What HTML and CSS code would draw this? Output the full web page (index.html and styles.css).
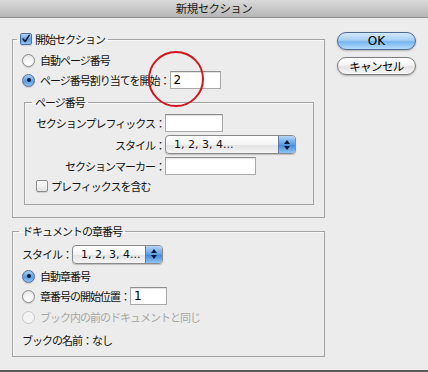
FILE: index.html
```html
<!DOCTYPE html>
<html lang="ja">
<head>
<meta charset="utf-8">
<title>新規セクション</title>
<link rel="stylesheet" href="styles.css">
</head>
<body>
<div class="window">
  <div class="titlebar">新規セクション</div>
  <div class="content">
    <div class="main">
      <fieldset class="group g1">
        <legend class="legend-check"><span class="checkbox checked"><svg viewBox="0 0 12 12" width="12" height="12"><path d="M2.6 6.2 L5 9 L9.8 1.6" fill="none" stroke="#0c1a3a" stroke-width="1.8" stroke-linecap="round" stroke-linejoin="round"/></svg></span>開始セクション</legend>
        <div class="row r-auto"><span class="radio"></span>自動ページ番号</div>
        <div class="row r-start"><span class="radio on"></span>ページ番号割り当てを開始：<span class="field f-start">2</span></div>
        <fieldset class="group inner">
          <legend>ページ番号</legend>
          <div class="form-grid">
            <span class="lbl">セクションプレフィックス：</span><span class="field f-prefix"></span>
            <span class="lbl">スタイル：</span><span class="select s-wide"><span class="sel-text">1, 2, 3, 4...</span><span class="sel-arrows"><i class="up"></i><i class="down"></i></span></span>
            <span class="lbl">セクションマーカー：</span><span class="field f-marker"></span>
          </div>
          <div class="row r-check"><span class="checkbox"></span>プレフィックスを含む</div>
        </fieldset>
      </fieldset>
      <fieldset class="group g2">
        <legend>ドキュメントの章番号</legend>
        <div class="row r-style">スタイル：<span class="select s-narrow"><span class="sel-text">1, 2, 3, 4...</span><span class="sel-arrows"><i class="up"></i><i class="down"></i></span></span></div>
        <div class="row r-auto2"><span class="radio on"></span>自動章番号</div>
        <div class="row r-start2"><span class="radio"></span>章番号の開始位置：<span class="field f-chap">1</span></div>
        <div class="row r-same disabled"><span class="radio"></span>ブック内の前のドキュメントと同じ</div>
        <div class="row r-book">ブックの名前：なし</div>
      </fieldset>
    </div>
    <div class="buttons">
      <div class="btn btn-ok">OK</div>
      <div class="btn btn-cancel">キャンセル</div>
    </div>
  </div>
  <div class="bottom-edge"></div>
  <div class="circle-mark"></div>
</div>
</body>
</html>
```
FILE: styles.css
```css
* { box-sizing: border-box; }
html, body { margin: 0; padding: 0; }
body {
  font-family: "DejaVu Sans", "Noto Sans CJK JP", sans-serif;
  font-size: 11px;
  color: #111;
  background: #ececec;
}
.window {
  position: relative;
  width: 428px;
  height: 372px;
  background: #ececec;
  overflow: hidden;
  display: flex;
  flex-direction: column;
}
.row, .group legend, .form-grid .lbl, .btn-cancel, .titlebar {
  letter-spacing: -1px;
}
.titlebar {
  height: 18px;
  flex: none;
  background: linear-gradient(#dadada, #b6b6b6);
  border-bottom: 1px solid #8d8d8d;
  text-align: center;
  font-family: "Noto Sans CJK JP", sans-serif;
  font-size: 11.5px;
  line-height: 17px;
  color: #1a1a1a;
  letter-spacing: -0.6px;
}
.content {
  flex: 1;
  display: flex;
  gap: 12px;
  padding: 0 0 0 12px;
}
.main { width: 313px; display: flex; flex-direction: column; }
.group {
  margin: 0;
  border: 1px solid #a3a3a3;
  box-shadow: inset 1px 1px 0 #f8f8f8;
  min-width: 0;
}
.group legend {
  height: 14px;
  line-height: 14px;
  padding: 0 3px;
  font-family: "Noto Sans CJK JP", sans-serif;
  display: flex;
  align-items: center;
}
.g1 { margin-top: 14px; padding: 6px 10px 12px 9px; }
.g1 > legend { margin-left: -5px; }
.g2 { margin-top: 6px; padding: 6px 10px 8px 9px; }
.g2 > legend { margin-left: -3px; }
.inner { margin: 5px 0 0 2px; padding: 5px 10px 11px 11px; }
.inner > legend { margin-left: -4px; }

.row {
  display: flex;
  align-items: center;
  height: 16px;
  font-family: "Noto Sans CJK JP", sans-serif;
  white-space: nowrap;
}
.r-start { height: 20px; margin-top: 2px; }
.r-check { margin-top: 4px; height: 14px; }
.r-style { height: 20px; }
.r-auto2 { margin-top: 4px; }
.r-start2 { height: 20px; margin-top: 2px; }
.r-same { margin-top: 3px; }
.r-book { margin-top: 7px; }
.disabled { color: #a6a6a6; }

.radio {
  width: 13px; height: 13px;
  border-radius: 50%;
  border: 1px solid #8b8b8b;
  background: radial-gradient(circle at 50% 75%, #ffffff 0, #f2f2f2 50%, #d9d9d9 100%);
  margin-right: 5px;
  flex: none;
  box-shadow: 0 1px 1px rgba(0,0,0,0.15);
  position: relative;
}
.radio.on {
  border-color: #4f6f9c;
  background: linear-gradient(#a9cdf2, #5e9ee2 55%, #8ec2f4);
}
.radio.on::after {
  content: "";
  position: absolute;
  left: 3.5px; top: 3.5px;
  width: 4px; height: 4px;
  border-radius: 50%;
  background: #0d1a33;
}
.disabled .radio { border-color: #c6c6c6; background: #f3f3f3; box-shadow: none; }

.checkbox {
  width: 12px; height: 12px;
  border: 1px solid #8b8b8b;
  border-radius: 2px;
  background: linear-gradient(#ffffff, #e2e2e2);
  margin-right: 3px;
  flex: none;
  display: inline-flex;
  align-items: center;
  justify-content: center;
  box-shadow: 0 1px 1px rgba(0,0,0,0.12);
}
.checkbox.checked {
  border-color: #4f6f9c;
  background: linear-gradient(#b1d3f4, #5f9fe2 55%, #8fc3f4);
}
.checkbox svg { display: block; }
.legend-check .checkbox { margin-right: 3px; }

.field {
  display: inline-flex;
  align-items: center;
  height: 18px;
  background: #fff;
  border: 1px solid #a9a9a9;
  border-top-color: #8e8e8e;
  box-shadow: inset 0 1px 1px rgba(0,0,0,0.12);
  padding-left: 3px;
  font-family: "DejaVu Sans", sans-serif;
  font-size: 12px;
  letter-spacing: 0;
  color: #000;
}
.f-start { width: 51px; height: 18px; }
.f-chap { width: 37px; }
.f-prefix { width: 58px; }
.f-marker { width: 91px; }

.form-grid {
  display: grid;
  grid-template-columns: 129px auto;
  column-gap: 0;
  row-gap: 3px;
  align-items: center;
  justify-items: start;
}
.form-grid .lbl {
  justify-self: end;
  font-family: "Noto Sans CJK JP", sans-serif;
  white-space: nowrap;
}

.select {
  display: inline-flex;
  height: 19px;
  border: 1px solid #8a8a8a;
  border-radius: 4px;
  background: linear-gradient(#ffffff, #f3f3f3 50%, #e2e2e2 51%, #f4f4f4);
  box-shadow: 0 1px 1px rgba(0,0,0,0.2);
  overflow: hidden;
  letter-spacing: 0;
}
.s-wide { width: 131px; }
.s-narrow { width: 91px; }
.sel-text {
  flex: 1;
  padding-left: 8px;
  line-height: 17px;
  font-family: "DejaVu Sans", sans-serif;
  font-size: 11px;
  color: #111;
}
.sel-arrows {
  width: 17px;
  flex: none;
  background: linear-gradient(#b5d5f6, #5d9de2 50%, #3f86d8 51%, #8ec3f5);
  border-left: 1px solid #5b7eae;
  display: flex;
  flex-direction: column;
  align-items: center;
  justify-content: center;
  gap: 2px;
}
.sel-arrows i {
  width: 0; height: 0;
  border-left: 3px solid transparent;
  border-right: 3px solid transparent;
}
.sel-arrows .up { border-bottom: 4px solid #0c1a36; }
.sel-arrows .down { border-top: 4px solid #0c1a36; }

.buttons {
  display: flex;
  flex-direction: column;
  gap: 7px;
  padding-top: 14px;
}
.btn {
  width: 79px;
  height: 18px;
  border-radius: 9px;
  display: flex;
  align-items: center;
  justify-content: center;
  font-family: "DejaVu Sans", "Noto Sans CJK JP", sans-serif;
  font-size: 12px;
  color: #000;
  box-shadow: 0 1px 2px rgba(0,0,0,0.25);
}
.btn-ok {
  border: 1px solid #4b6a98;
  background: linear-gradient(#d4e9fc, #a6cff5 45%, #76b5ef 55%, #b5dcfb);
}
.btn-cancel {
  border: 1px solid #7d7d7d;
  background: linear-gradient(#ffffff, #f4f4f4 45%, #e3e3e3 55%, #f8f8f8);
  font-family: "Noto Sans CJK JP", sans-serif;
  font-size: 11.5px;
  letter-spacing: -0.6px;
}

.bottom-edge {
  position: absolute;
  left: 0; right: 0; bottom: 0;
  height: 2px;
  background: #5a5a5a;
}
.circle-mark {
  position: absolute;
  left: 148px;
  top: 51px;
  width: 56px;
  height: 56px;
  border: 2px solid #d2161e;
  border-radius: 50%;
}
```
